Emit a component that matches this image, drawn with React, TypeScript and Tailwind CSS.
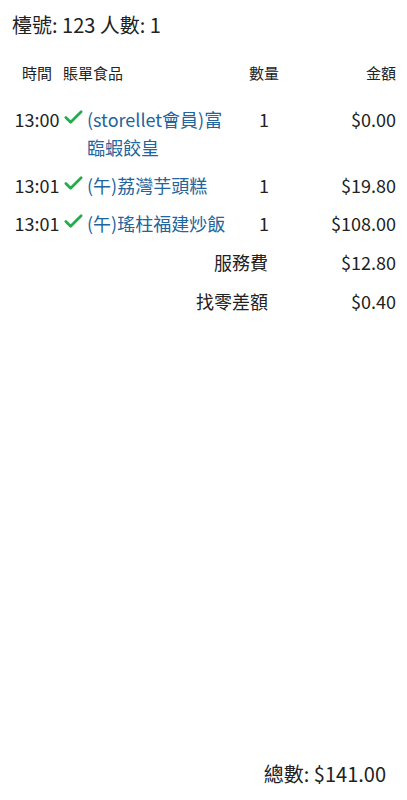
import { Check } from 'lucide-react'

const items = [
  { time: '13:00', name: '(storellet會員)富臨蝦餃皇', qty: 1, amount: '$0.00' },
  { time: '13:01', name: '(午)荔灣芋頭糕', qty: 1, amount: '$19.80' },
  { time: '13:01', name: '(午)瑤柱福建炒飯', qty: 1, amount: '$108.00' },
]

const extras = [
  { label: '服務費', amount: '$12.80' },
  { label: '找零差額', amount: '$0.40' },
]

export default function App() {
  return (
    <div
      className="h-[800px] flex flex-col bg-white text-[#222]"
      style={{ fontFamily: '"Noto Sans CJK TC", "Noto Sans", sans-serif' }}
    >
      {/* TABLE INFO */}
      <div className="pl-[12px] pt-[10px] text-[20px] leading-[30px]">檯號: 123 人數: 1</div>

      {/* HEADER */}
      <div className="grid grid-cols-[50px_174px_56px_104px] pl-[12px] mt-[21px] text-[15px] leading-[24px]">
        <div className="text-center">時間</div>
        <div className="pl-[1px]">賬單食品</div>
        <div className="text-center">數量</div>
        <div className="text-right">金額</div>
      </div>

      {/* ITEMS */}
      <div className="mt-[15px] flex flex-col text-[18px] leading-[28px]">
        {items.map((it, i) => (
          <div key={i} className="grid grid-cols-[50px_174px_56px_104px] pl-[12px] py-[5px]">
            <div className="text-center">{it.time}</div>
            <div className="flex items-start">
              <Check className="w-[23px] h-[23px] mt-[1px] mr-[2px] shrink-0 text-[#1fae4b]" strokeWidth={2.8} />
              <span className="text-[#22649b] max-w-[148px]">{it.name}</span>
            </div>
            <div className="text-center">{it.qty}</div>
            <div className="text-right">{it.amount}</div>
          </div>
        ))}
        {extras.map((ex, i) => (
          <div key={i} className="grid grid-cols-[280px_104px] pl-[12px] pt-[6px] pb-[5px]">
            <div className="text-right pr-[24px]">{ex.label}</div>
            <div className="text-right">{ex.amount}</div>
          </div>
        ))}
      </div>

      {/* TOTAL */}
      <div className="mt-auto flex justify-end pr-[21px] pb-[12px] text-[20px] leading-[28px]">總數: $141.00</div>
    </div>
  )
}
